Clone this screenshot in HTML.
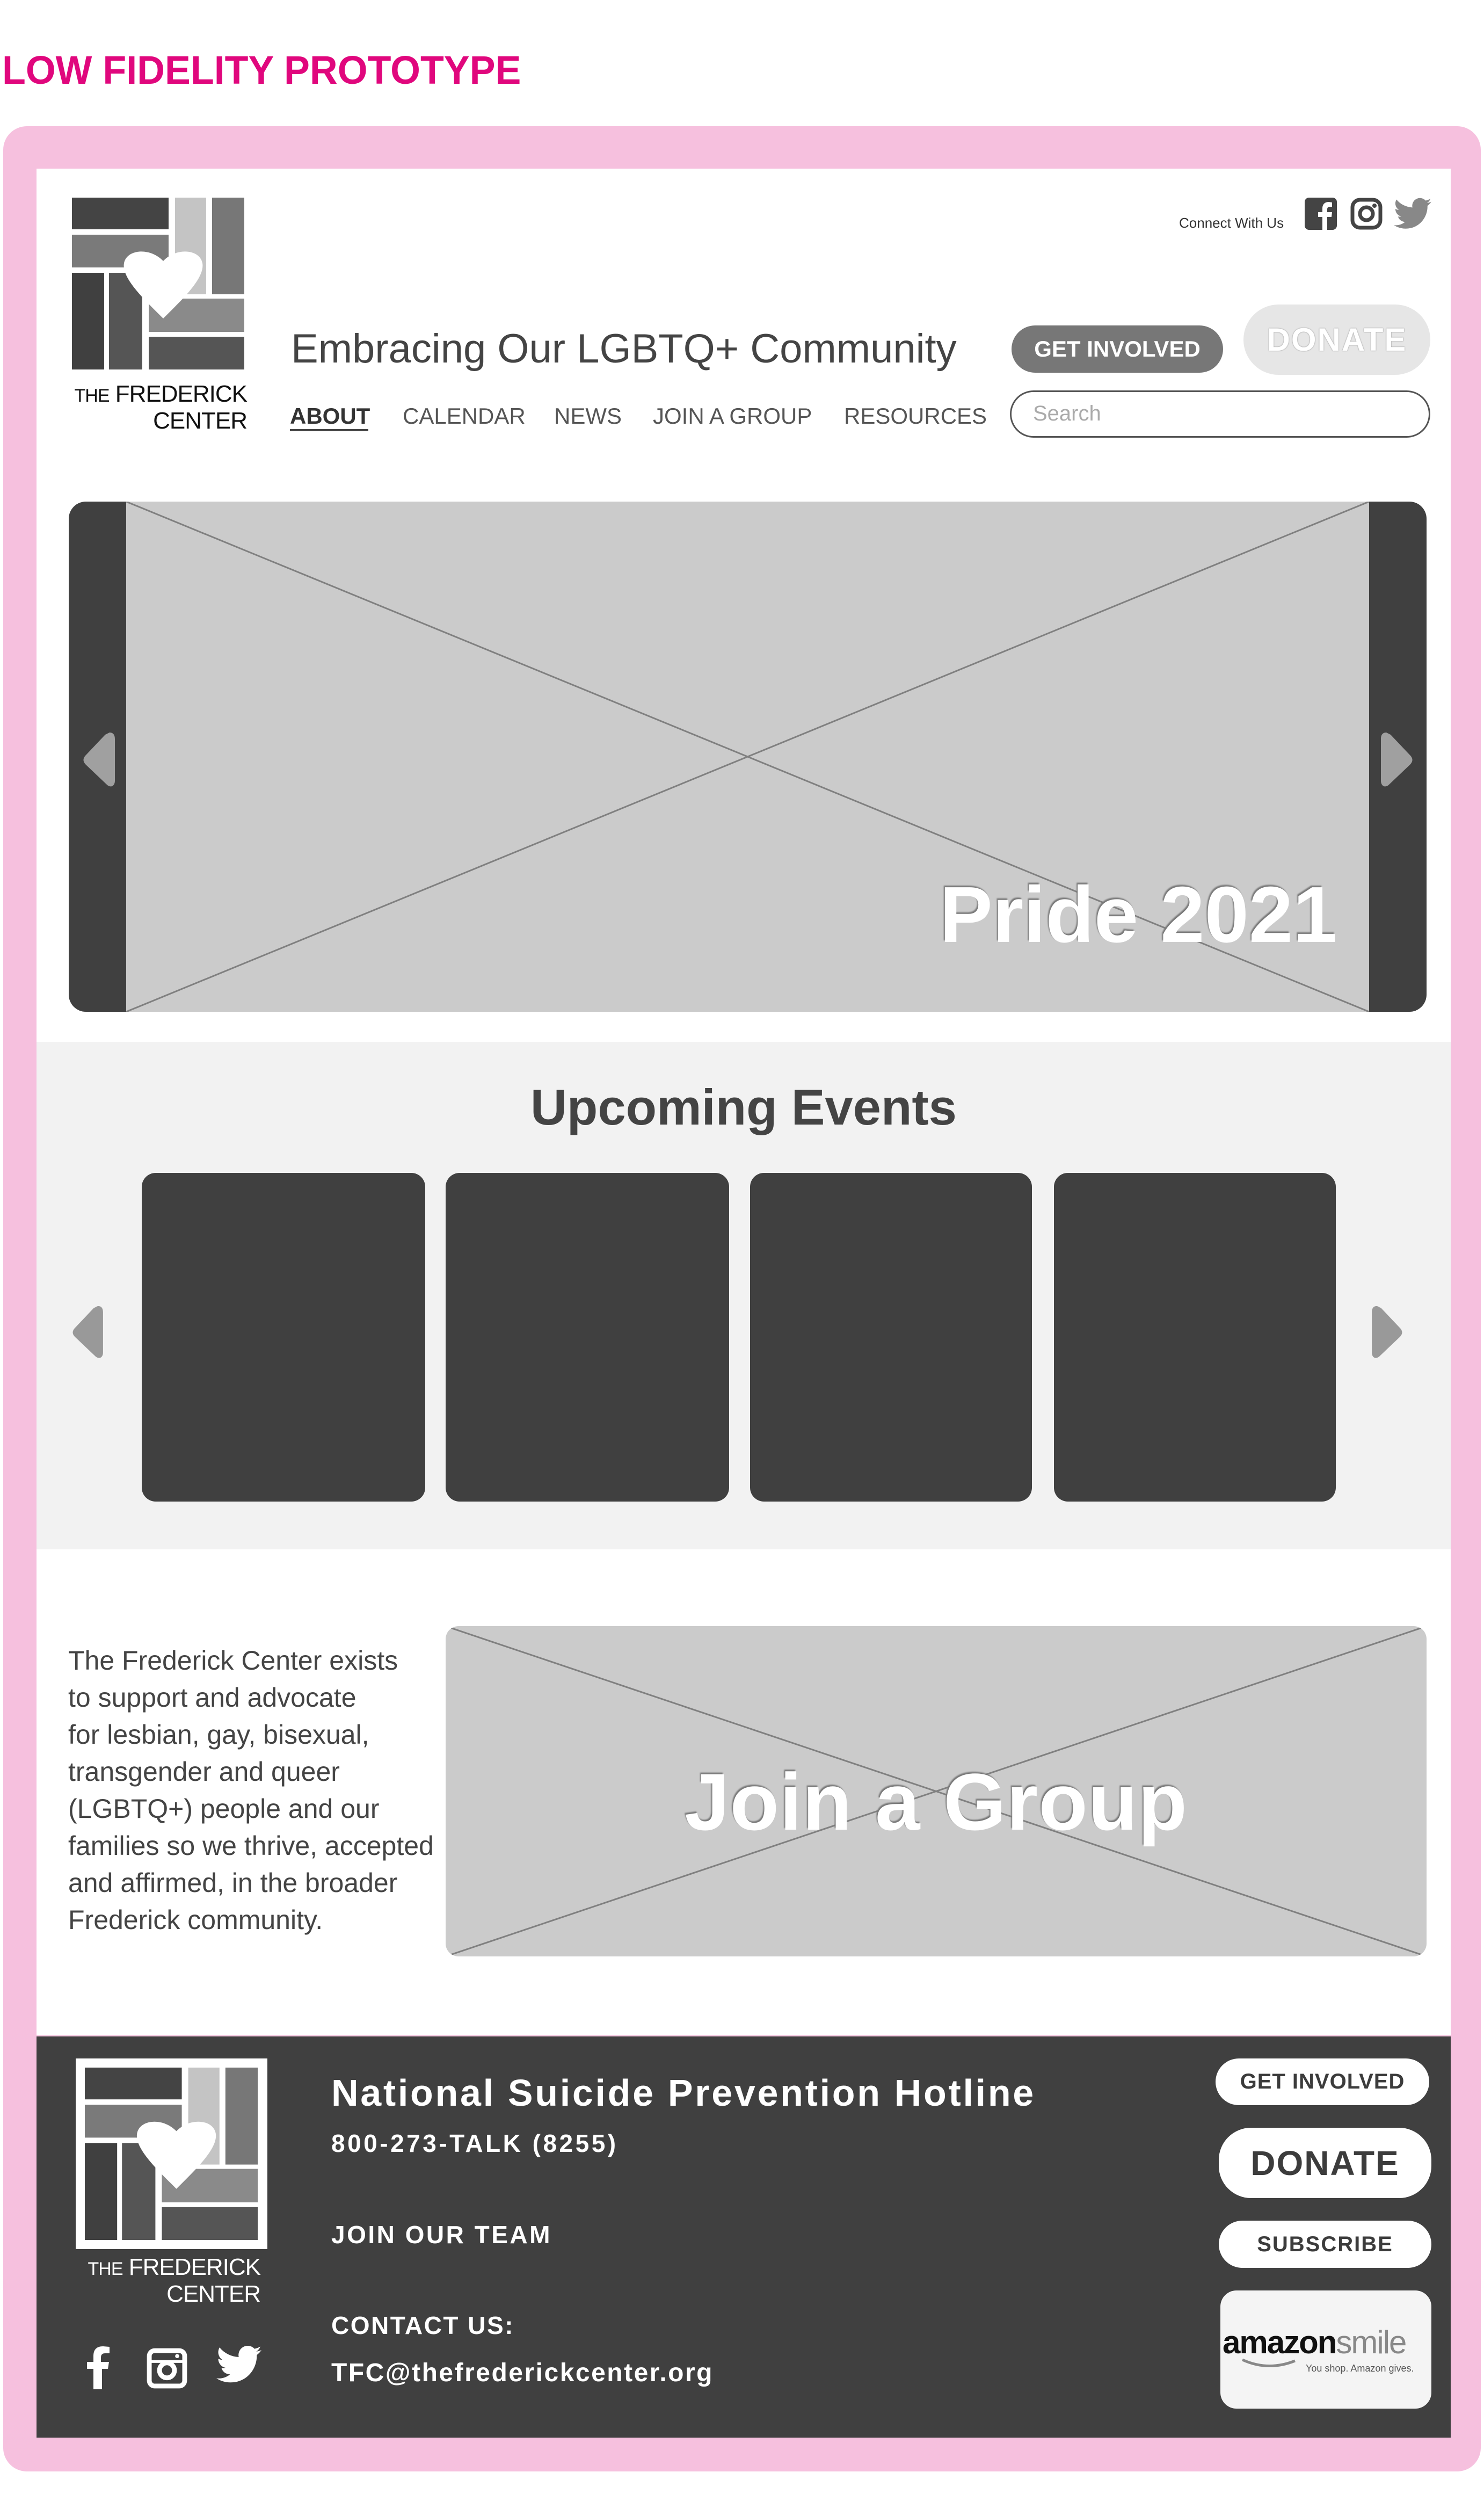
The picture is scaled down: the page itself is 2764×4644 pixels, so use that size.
<!DOCTYPE html>
<html><head><meta charset="utf-8"><style>
*{margin:0;padding:0;box-sizing:border-box}
body{width:2764px;height:4644px;background:#fff;position:relative;font-family:"Liberation Sans",sans-serif;overflow:hidden}
.a{position:absolute}
.t{position:absolute;white-space:nowrap;line-height:1}
.nav{font-size:42px;color:#555;top:754px}
.abt{font-size:50px;color:#444;line-height:69px;left:127px;top:3058px}
.fw{color:#fff;font-weight:bold}
.btn{position:absolute;background:#fff;border-radius:44px;color:#3c3c3c;font-weight:bold;display:flex;align-items:center;justify-content:center}
</style></head><body>

<div class="t" style="left:4px;top:94px;font-size:74px;font-weight:bold;color:#e0077d;transform:scaleX(0.97);transform-origin:left">LOW FIDELITY PROTOTYPE</div>

<div class="a" style="left:6px;top:235px;width:2752px;height:4367px;background:#f6c0de;border-radius:44px"></div>
<div class="a" style="left:68px;top:314px;width:2634px;height:3476px;background:#fff"></div>

<svg width="0" height="0" style="position:absolute">
<defs>
<g id="logo">
<rect x="0" y="0" width="180" height="59" fill="#444"/>
<rect x="192" y="0" width="58" height="180" fill="#c4c4c4"/>
<rect x="261" y="0" width="60" height="180" fill="#777"/>
<rect x="0" y="69" width="180" height="61" fill="#7a7a7a"/>
<rect x="0" y="140" width="60" height="180" fill="#404040"/>
<rect x="69" y="140" width="62" height="180" fill="#555"/>
<rect x="143" y="188" width="178" height="62" fill="#8a8a8a"/>
<rect x="143" y="259" width="178" height="61" fill="#555"/>
<path d="M170,225 C135,190 92,150 97,122 C102,96 145,92 170,118 C195,92 238,96 243,122 C248,150 205,190 170,225Z" fill="#fff"/>
</g>
</defs>
</svg>

<svg class="a" style="left:134px;top:368px" width="321" height="320"><use href="#logo"/></svg>
<div class="t" style="left:134px;top:712px;font-size:44px;color:#111;width:326px;text-align:right;letter-spacing:-1px"><span style="font-size:34px">THE</span> FREDERICK</div>
<div class="t" style="left:134px;top:762px;font-size:44px;color:#111;width:326px;text-align:right;letter-spacing:-1px">CENTER</div>

<div class="t" style="left:542px;top:612px;font-size:76px;color:#444">Embracing Our LGBTQ+ Community</div>

<div class="t nav" style="left:540px;color:#333;font-weight:bold">ABOUT</div>
<div class="a" style="left:540px;top:799px;width:146px;height:4px;background:#444"></div>
<div class="t nav" style="left:750px">CALENDAR</div>
<div class="t nav" style="left:1032px">NEWS</div>
<div class="t nav" style="left:1216px">JOIN A GROUP</div>
<div class="t nav" style="left:1572px">RESOURCES</div>

<div class="t" style="left:2196px;top:402px;font-size:26px;color:#333">Connect With Us</div>
<svg class="a" style="left:2430px;top:368px" width="60" height="60" viewBox="0 0 60 60"><rect width="60" height="60" rx="8" fill="#444"/><path d="M33 60V36h-8v-9h8v-7c0-8 5-12 12-12l6 1v8h-4c-4 0-5 2-5 5v5h9l-1 9h-8v24z" fill="#fff"/></svg>
<svg class="a" style="left:2515px;top:368px" width="60" height="60" viewBox="0 0 60 60"><rect x="4" y="4" width="52" height="52" rx="14" fill="none" stroke="#444" stroke-width="7"/><circle cx="30" cy="30" r="12" fill="none" stroke="#444" stroke-width="7"/><circle cx="45" cy="15" r="4" fill="#444"/></svg>
<svg class="a" style="left:2596px;top:368px" width="70" height="60" viewBox="0 0 24 20"><path d="M24 2.3c-.9.4-1.8.7-2.8.8 1-.6 1.8-1.6 2.2-2.7-1 .6-2 1-3.1 1.2A4.9 4.9 0 0 0 11.9 6 14 14 0 0 1 1.7.9a4.9 4.9 0 0 0 1.5 6.6c-.8 0-1.6-.3-2.2-.6 0 2.4 1.7 4.4 3.9 4.8-.7.2-1.5.2-2.2.1.6 2 2.4 3.4 4.6 3.4A9.9 9.9 0 0 1 0 17.3 14 14 0 0 0 7.5 19.5c9.1 0 14-7.5 14-14v-.6c1-.7 1.8-1.6 2.5-2.6z" fill="#888"/></svg>

<div class="btn" style="left:1884px;top:606px;width:394px;height:88px;background:#777;color:#fff;font-size:42px">GET INVOLVED</div>
<div class="btn" style="left:2316px;top:567px;width:348px;height:131px;background:#e6e6e6;border-radius:66px;color:#fff;font-size:60px;text-shadow:0 0 2px #aaa,0 0 2px #aaa;letter-spacing:2px">DONATE</div>
<div class="a" style="left:1881px;top:727px;width:783px;height:88px;border:3px solid #555;border-radius:44px"></div>
<div class="t" style="left:1924px;top:750px;font-size:40px;color:#aaa">Search</div>

<!-- hero -->
<div class="a" style="left:128px;top:934px;width:2529px;height:950px;background:#404040;border-radius:32px;overflow:hidden">
  <svg class="a" style="left:107px;top:0" width="2315" height="950"><rect width="2315" height="950" fill="#cbcbcb"/><line x1="0" y1="0" x2="2315" y2="950" stroke="#808080" stroke-width="3"/><line x1="0" y1="950" x2="2315" y2="0" stroke="#808080" stroke-width="3"/></svg>
</div>
<svg class="a" style="left:152px;top:1360px" width="64" height="110" viewBox="0 0 64 110"><path d="M52 4C60 4 62 10 62 16V94C62 102 56 108 48 102L8 64C2 58 2 52 8 46L44 8Z" fill="#a0a0a0"/></svg>
<svg class="a" style="left:2570px;top:1360px" width="64" height="110" viewBox="0 0 64 110"><path d="M12 4C4 4 2 10 2 16V94C2 102 8 108 16 102L56 64C62 58 62 52 56 46L20 8Z" fill="#a0a0a0"/></svg>
<div class="t" style="left:1750px;top:1630px;font-size:148px;font-weight:bold;color:#fff;text-shadow:-2px -3px 2px #777;letter-spacing:0px">Pride 2021</div>

<!-- events -->
<div class="a" style="left:68px;top:1940px;width:2634px;height:945px;background:#f2f2f2"></div>
<div class="t" style="left:68px;width:2634px;text-align:center;top:2015px;font-size:94px;font-weight:bold;color:#444">Upcoming Events</div>
<div class="a" style="left:264px;top:2184px;width:528px;height:612px;background:#404040;border-radius:26px"></div>
<div class="a" style="left:830px;top:2184px;width:528px;height:612px;background:#404040;border-radius:26px"></div>
<div class="a" style="left:1397px;top:2184px;width:525px;height:612px;background:#404040;border-radius:26px"></div>
<div class="a" style="left:1963px;top:2184px;width:525px;height:612px;background:#404040;border-radius:26px"></div>
<svg class="a" style="left:132px;top:2428px" width="62" height="106" viewBox="0 0 64 110"><path d="M52 4C60 4 62 10 62 16V94C62 102 56 108 48 102L8 64C2 58 2 52 8 46L44 8Z" fill="#999"/></svg>
<svg class="a" style="left:2553px;top:2428px" width="62" height="106" viewBox="0 0 64 110"><path d="M12 4C4 4 2 10 2 16V94C2 102 8 108 16 102L56 64C62 58 62 52 56 46L20 8Z" fill="#999"/></svg>

<!-- about -->
<div class="t abt">The Frederick Center exists<br>to support and advocate<br>for lesbian, gay, bisexual,<br>transgender and queer<br>(LGBTQ+) people and our<br>families so we thrive, accepted<br>and affirmed, in the broader<br>Frederick community.</div>
<div class="a" style="left:830px;top:3028px;width:1827px;height:615px;border-radius:24px;overflow:hidden">
<svg width="1827" height="615"><rect width="1827" height="615" fill="#cbcbcb"/><line x1="0" y1="0" x2="1827" y2="615" stroke="#808080" stroke-width="3"/><line x1="0" y1="615" x2="1827" y2="0" stroke="#808080" stroke-width="3"/></svg>
</div>
<div class="t" style="left:830px;width:1827px;text-align:center;top:3280px;font-size:150px;font-weight:bold;color:#fff;text-shadow:-2px -3px 2px #777;letter-spacing:1px">Join a Group</div>

<!-- footer -->
<div class="a" style="left:68px;top:3792px;width:2634px;height:747px;background:#404040"></div>
<div class="a" style="left:141px;top:3833px;width:357px;height:355px;border:12px solid #fff;background:#fff"></div>
<svg class="a" style="left:158px;top:3850px" width="322" height="321" viewBox="0 0 321 320"><use href="#logo"/></svg>
<div class="t" style="left:141px;top:4200px;font-size:44px;color:#fff;width:344px;text-align:right;letter-spacing:-1px"><span style="font-size:34px">THE</span> FREDERICK</div>
<div class="t" style="left:141px;top:4250px;font-size:44px;color:#fff;width:344px;text-align:right;letter-spacing:-1px">CENTER</div>
<svg class="a" style="left:160px;top:4367px" width="48" height="82" viewBox="0 0 48 82"><path d="M14 82V44H2V31H14V20C14 8 20 2 32 2l12 1v12h-8c-6 0-8 3-8 8v8h15l-2 13H30v38z" fill="#fff"/></svg>
<svg class="a" style="left:273px;top:4372px" width="76" height="76" viewBox="0 0 60 60"><rect x="4" y="4" width="52" height="52" rx="8" fill="none" stroke="#fff" stroke-width="7"/><rect x="4" y="18" width="52" height="4" fill="#fff"/><circle cx="30" cy="33" r="11" fill="none" stroke="#fff" stroke-width="7"/><circle cx="45" cy="12" r="3" fill="#fff"/></svg>
<svg class="a" style="left:403px;top:4367px" width="84" height="72" viewBox="0 0 24 20"><path d="M24 2.3c-.9.4-1.8.7-2.8.8 1-.6 1.8-1.6 2.2-2.7-1 .6-2 1-3.1 1.2A4.9 4.9 0 0 0 11.9 6 14 14 0 0 1 1.7.9a4.9 4.9 0 0 0 1.5 6.6c-.8 0-1.6-.3-2.2-.6 0 2.4 1.7 4.4 3.9 4.8-.7.2-1.5.2-2.2.1.6 2 2.4 3.4 4.6 3.4A9.9 9.9 0 0 1 0 17.3 14 14 0 0 0 7.5 19.5c9.1 0 14-7.5 14-14v-.6c1-.7 1.8-1.6 2.5-2.6z" fill="#fff"/></svg>

<div class="t fw" style="left:617px;top:3862px;font-size:70px;letter-spacing:3.7px">National Suicide Prevention Hotline</div>
<div class="t fw" style="left:617px;top:3968px;font-size:46px;letter-spacing:4.5px">800-273-TALK (8255)</div>
<div class="t fw" style="left:617px;top:4138px;font-size:46px;letter-spacing:3.5px">JOIN OUR TEAM</div>
<div class="t fw" style="left:617px;top:4307px;font-size:46px;letter-spacing:2.5px">CONTACT US:</div>
<div class="t fw" style="left:617px;top:4395px;font-size:48px;letter-spacing:2.5px">TFC@thefrederickcenter.org</div>

<div class="btn" style="left:2264px;top:3833px;width:398px;height:87px;font-size:40px;letter-spacing:1px">GET INVOLVED</div>
<div class="btn" style="left:2270px;top:3962px;width:396px;height:131px;border-radius:60px;font-size:64px;letter-spacing:2px">DONATE</div>
<div class="btn" style="left:2270px;top:4135px;width:396px;height:88px;font-size:40px;letter-spacing:2px">SUBSCRIBE</div>
<div class="a" style="left:2273px;top:4265px;width:393px;height:220px;background:#f4f4f4;border-radius:30px"></div>
<div class="t" style="left:2277px;top:4332px;font-size:60px;color:#111;font-weight:bold;letter-spacing:-2px">amazon<span style="font-weight:normal;color:#888">smile</span></div>
<div class="t" style="left:2432px;top:4401px;font-size:18px;color:#555">You shop. Amazon gives.</div>
<svg class="a" style="left:2312px;top:4390px" width="110" height="24"><path d="M2 4Q50 26 100 6" stroke="#888" stroke-width="5" fill="none"/></svg>

</body></html>
